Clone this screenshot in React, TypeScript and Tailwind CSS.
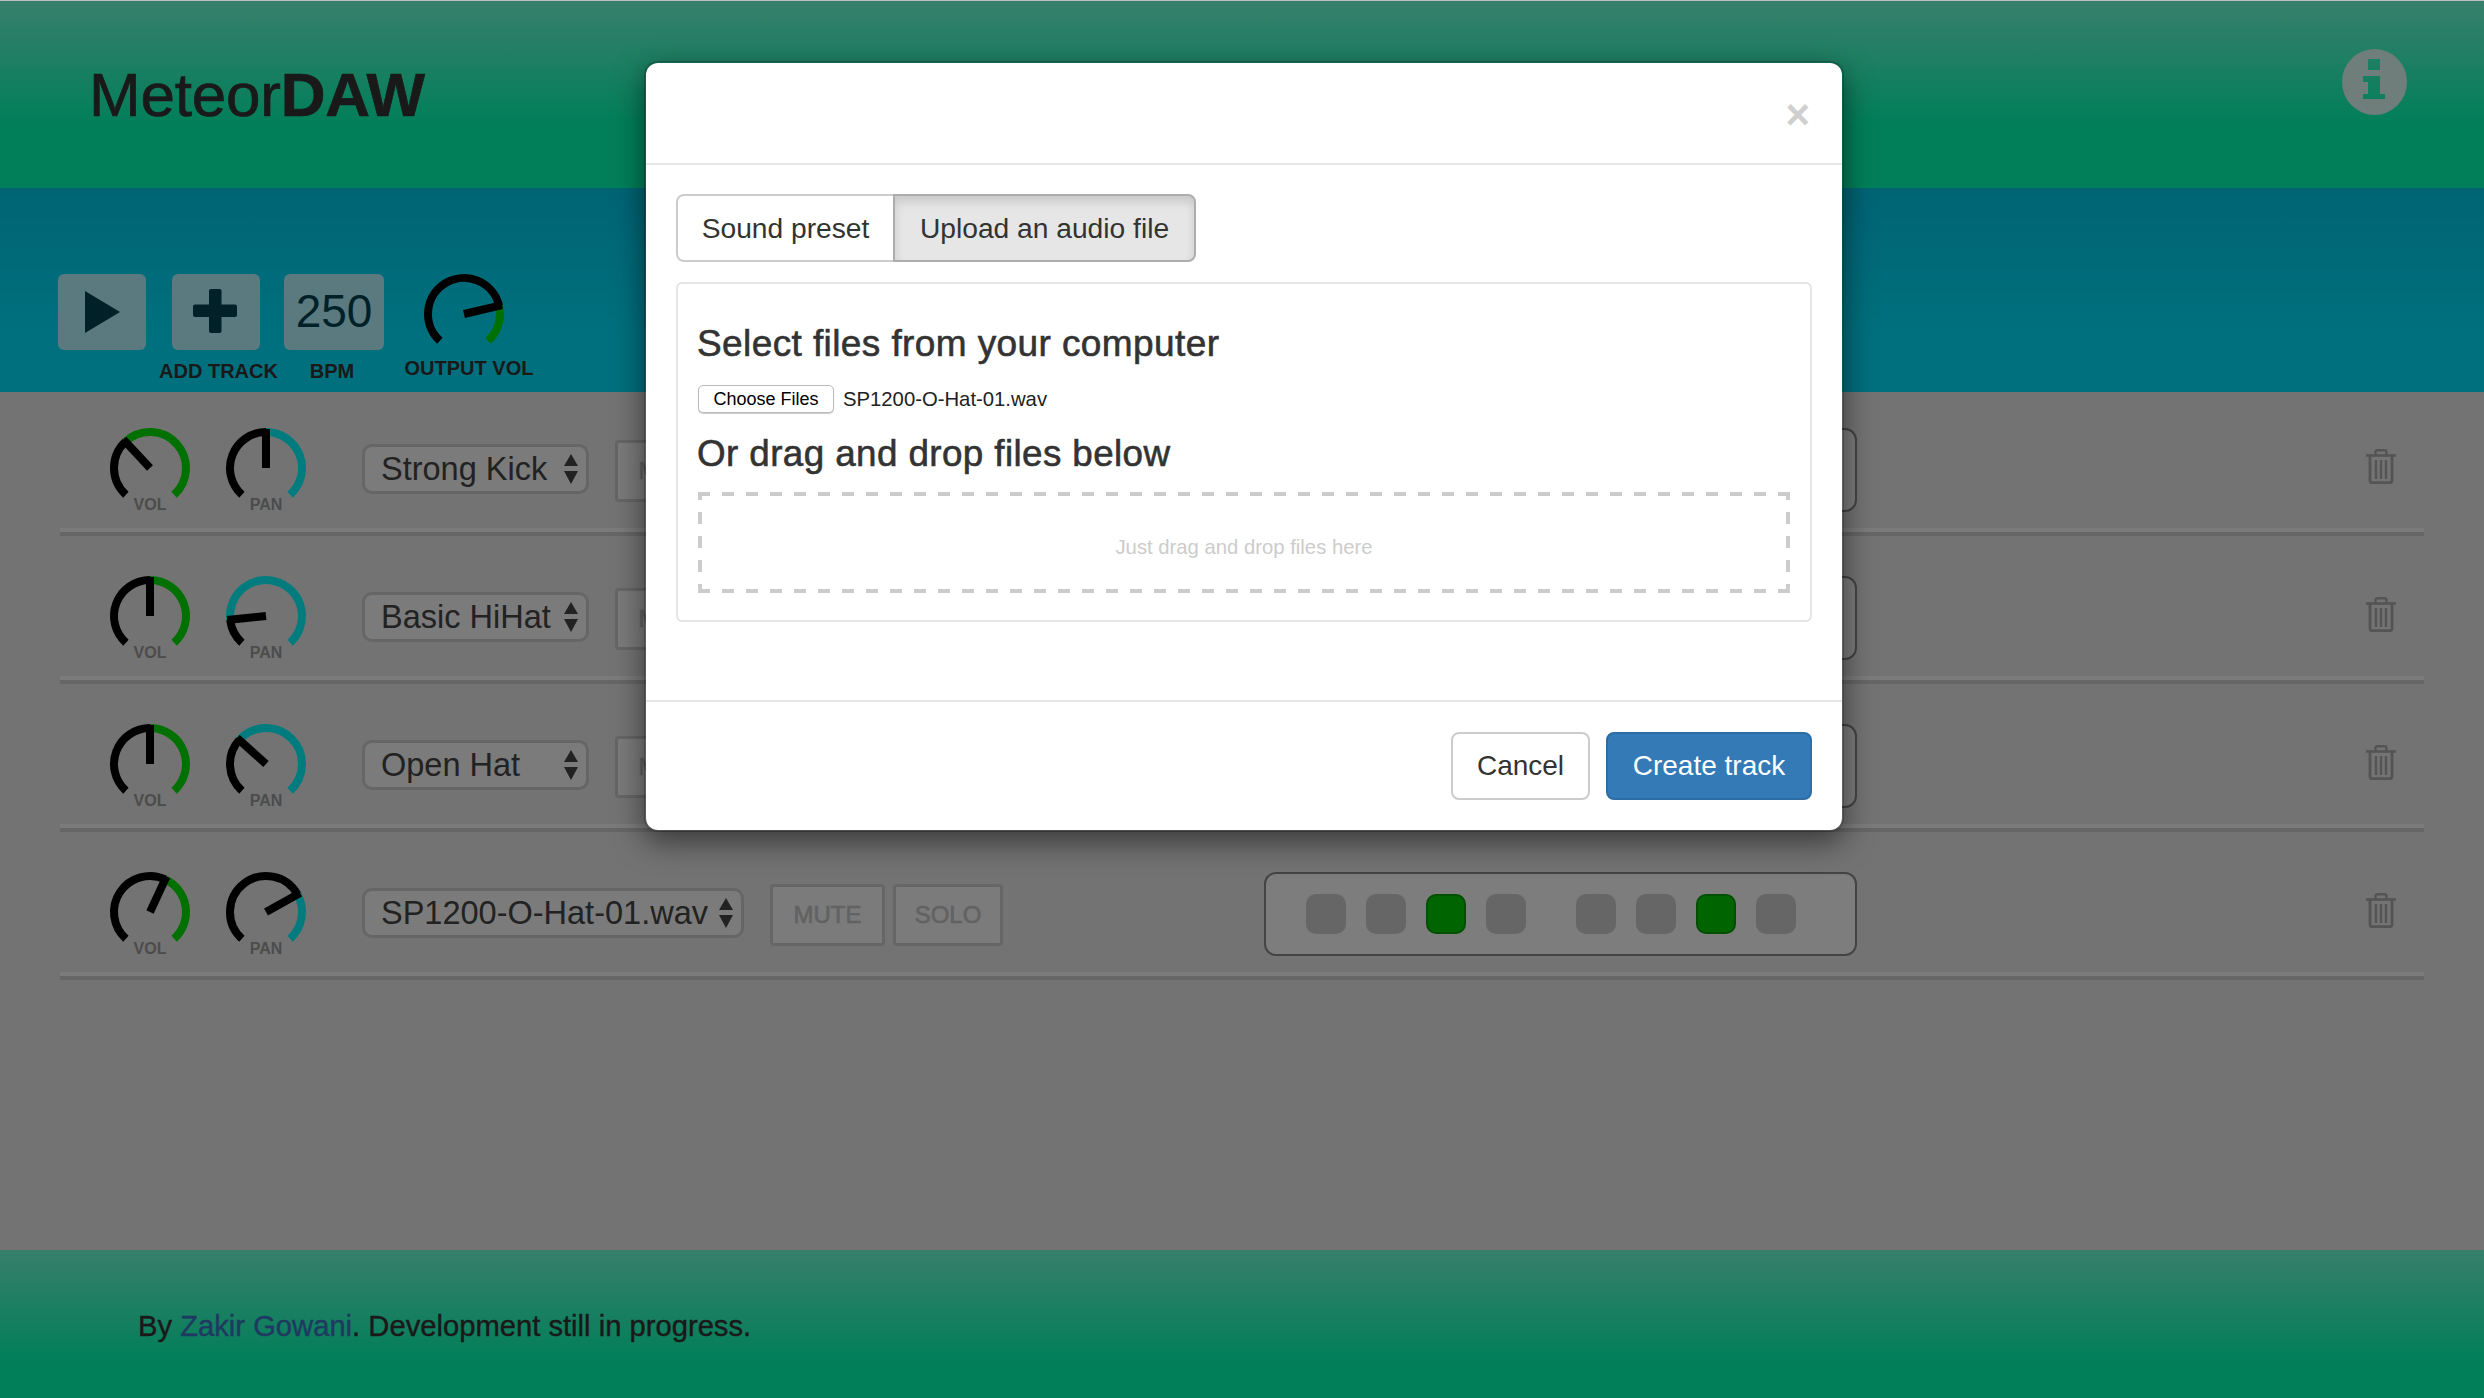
import React from "react";

function polar(r: number, deg: number) {
  const a = ((deg - 90) * Math.PI) / 180;
  return [40 + r * Math.cos(a), 40 + r * Math.sin(a)];
}
function arc(from: number, to: number) {
  const r = 36;
  const [x1, y1] = polar(r, from);
  const [x2, y2] = polar(r, to);
  const large = to - from > 180 ? 1 : 0;
  return `M${x1} ${y1}A${r} ${r} 0 ${large} 1 ${x2} ${y2}`;
}

function Knob({ value, color }: { value: number; color: string }) {
  const [tx, ty] = polar(39, value);
  return (
    <svg width="80" height="72" viewBox="0 0 80 72" className="block overflow-visible">
      <path d={arc(-138, value)} fill="none" stroke="#000" strokeWidth="8" />
      <path d={arc(value, 138)} fill="none" stroke={color} strokeWidth="8" />
      <path d={`M40 40L${tx} ${ty}`} fill="none" stroke="#000" strokeWidth="8" />
    </svg>
  );
}

function LabeledKnob({ value, color, label }: { value: number; color: string; label: string }) {
  return (
    <div className="flex w-[80px] flex-col items-center">
      <Knob value={value} color={color} />
      <div className="mt-[-3px] text-[16px] leading-[16px] font-bold text-[#999999]">{label}</div>
    </div>
  );
}

function Trash() {
  return (
    <svg width="30" height="35" viewBox="0 0 30 35" className="mt-[21px] ml-[509px] shrink-0" fill="none" stroke="#a8a8a8">
      <path d="M0 6.5H30" strokeWidth="2.6" />
      <path d="M9.5 6V3.2C9.5 1.8 10.5 1.2 11.5 1.2H18.5C19.5 1.2 20.5 1.8 20.5 3.2V6" strokeWidth="2.4" />
      <path d="M4 7V31.5C4 33 5 33.7 6 33.7H24C25 33.7 26 33 26 31.5V7" strokeWidth="2.8" />
      <path d="M10 11V30M15 11V30M20 11V30" strokeWidth="2.4" />
    </svg>
  );
}

const ROWS = [
  { name: "Strong Kick", vol: -43, pan: 0, w: "w-[227px]" },
  { name: "Basic HiHat", vol: 0, pan: -96, w: "w-[227px]" },
  { name: "Open Hat", vol: 0, pan: -48, w: "w-[227px]" },
  { name: "SP1200-O-Hat-01.wav", vol: 25, pan: 61, w: "w-[382px]" },
];

function Pad({ on }: { on?: boolean }) {
  return (
    <div
      className={
        on
          ? "h-[40px] w-[40px] rounded-[10px] border-2 border-[#00a000] bg-[#00c800]"
          : "h-[40px] w-[40px] rounded-[10px] bg-[#cccccc]"
      }
    />
  );
}

function Row({ row, first }: { row: (typeof ROWS)[number]; first: boolean }) {
  return (
    <div className="flex flex-col">
      <div className={first ? "flex h-[136px] pt-[36px] pl-[50px]" : "flex h-[140px] pt-[40px] pl-[50px]"}>
        <div className="flex w-[1154px] shrink-0 items-start">
          <div className="flex gap-[36px]">
            <LabeledKnob value={row.vol} color="#00e000" label="VOL" />
            <LabeledKnob value={row.pan} color="#00f8ff" label="PAN" />
          </div>
          <div
            className={`ml-[56px] mt-[16px] flex h-[50px] ${row.w} items-center justify-between rounded-[10px] border-[3px] border-[#cccccc] bg-[#f6f6f6] pr-[8px] pl-[16px] text-[32.500px] text-[#444444]`}
          >
            <span className="whitespace-nowrap">{row.name}</span>
            <svg width="14" height="30" viewBox="0 0 14 30" className="shrink-0">
              <path d="M7 0L14 12H0ZM0 17H14L7 30Z" fill="#444444" />
            </svg>
          </div>
          <div className="mt-[12px] ml-[26px] flex gap-[8px]">
            <div className="flex h-[62px] w-[115px] items-center justify-center rounded-[4px] border-[3px] border-[#cccccc] bg-[#f6f6f6] text-[24px] text-[#c4c4c4] [-webkit-text-stroke:0.6px_#c4c4c4]">
              MUTE
            </div>
            <div className="flex h-[62px] w-[110px] items-center justify-center rounded-[4px] border-[3px] border-[#cccccc] bg-[#f6f6f6] text-[24px] text-[#c4c4c4] [-webkit-text-stroke:0.6px_#c4c4c4]">
              SOLO
            </div>
          </div>
        </div>
        <div className="flex h-[84px] w-[593px] shrink-0 items-center gap-[50px] rounded-[12px] border-2 border-[#888888] bg-[#fafafa] pl-[40px]">
          <div className="flex gap-[20px]">
            <Pad />
            <Pad />
            <Pad on />
            <Pad />
          </div>
          <div className="flex gap-[20px]">
            <Pad />
            <Pad />
            <Pad on />
            <Pad />
          </div>
        </div>
        <Trash />
      </div>
      <div className="h-[4px] bg-[#f6f6f6]" />
      <div className="h-[4px] bg-[#cccccc]" />
    </div>
  );
}

function Tile({ className, children }: { className: string; children: React.ReactNode }) {
  return (
    <div className={`flex h-[76px] items-center justify-center rounded-[6px] bg-[#b5f5ff] ${className}`}>{children}</div>
  );
}

export default function App() {
  return (
    <div className="relative flex h-[1398px] w-[2484px] flex-col overflow-hidden bg-[#e6e6e6] font-['Liberation_Sans',Arial,sans-serif] text-[#333333]">
      <header className="flex h-[188px] shrink-0 items-start justify-between bg-[linear-gradient(180deg,#70ffd8_0%,#00ffb2_68%)] pt-[49px] pr-[77px] pl-[89px]">
        <h1 className="mt-[16px] text-[62px] leading-[60px] tracking-[-0.2px] [-webkit-text-stroke:0.7px_#333333]">
          Meteor<b>DAW</b>
        </h1>
        <svg width="65" height="66" viewBox="0 0 65 66" className="shrink-0">
          <path
            fillRule="evenodd"
            fill="#dffcf4"
            d="M32.5 0A32.5 33 0 1 0 32.5 66A32.5 33 0 1 0 32.5 0ZM26 10H38V21H26ZM21 27H38V45H43V50H21V45H26V33H21Z"
          />
        </svg>
      </header>

      <section className="flex h-[204px] shrink-0 items-start bg-[linear-gradient(180deg,#00c8e8_0%,#00e0fc_70%)] pt-[86px] pl-[58px]">
        <Tile className="w-[88px]">
          <svg width="36" height="42" viewBox="0 0 36 42" className="ml-[2px]">
            <path d="M0 0L35 21L0 42Z" fill="#00424f" />
          </svg>
        </Tile>
        <div className="ml-[26px] flex w-[88px] flex-col items-center">
          <Tile className="w-[88px]">
            <svg width="44" height="44" viewBox="0 0 44 44" className="mr-[3px] mb-[2px]">
              <path
                d="M16 2A2 2 0 0 1 18 0H26.500A2 2 0 0 1 28.500 2V15.500H42A2 2 0 0 1 44 17.500V26A2 2 0 0 1 42 28H28.500V42A2 2 0 0 1 26.500 44H18A2 2 0 0 1 16 42V28H2A2 2 0 0 1 0 26V17.500A2 2 0 0 1 2 15.500H16Z"
                fill="#00424f"
              />
            </svg>
          </Tile>
          <div className="mt-[9px] ml-[5px] text-[20px] leading-[24px] font-bold whitespace-nowrap">ADD TRACK</div>
        </div>
        <div className="ml-[24px] flex w-[100px] flex-col items-center">
          <Tile className="w-[100px] pb-[2px] text-[46px] text-[#00424f]">250</Tile>
          <div className="mt-[9px] mr-[4px] text-[20px] leading-[24px] font-bold">BPM</div>
        </div>
        <div className="ml-[40px] flex w-[80px] flex-col items-center">
          <Knob value={77} color="#00e000" />
          <div className="mt-[10px] ml-[10px] text-[20px] leading-[24px] font-bold whitespace-nowrap">OUTPUT VOL</div>
        </div>
      </section>

      <main className="flex-1 px-[60px]">
        {ROWS.map((r, i) => (
          <Row key={r.name} row={r} first={i === 0} />
        ))}
      </main>

      <footer className="h-[148px] shrink-0 bg-[linear-gradient(180deg,#6effd6_0%,#00ffb2_78%)] pt-[56px] pl-[138px] text-[29.200px] leading-[40px] [-webkit-text-stroke:0.4px_#333333]">
        By <a className="text-[#3d74c0] [-webkit-text-stroke:0.4px_#3d74c0]">Zakir Gowani</a>. Development still in progress.
      </footer>

      <div className="absolute inset-0 border-t border-[#bdbdbd] bg-[rgba(0,0,0,0.5)]">
        <div className="mt-[60px] ml-[644px] w-[1200px] rounded-[14px] border-2 border-black/20 bg-white bg-clip-padding shadow-[0_10px_30px_rgba(0,0,0,0.5)]">
          <div className="flex h-[102px] justify-end border-b-2 border-[#e5e5e5] pt-[31px] pr-[32px] text-[42px] leading-[42px] font-bold text-[#cfcfcf]">
            ×
          </div>
          <div className="pt-[29px] pr-[30px] pb-[78px] pl-[30px]">
            <div className="flex h-[68px] text-[28.200px]">
              <div className="flex w-[219px] items-center justify-center rounded-l-[8px] border-2 border-[#cccccc]">Sound preset</div>
              <div className="ml-[-2px] flex w-[303px] items-center justify-center rounded-r-[8px] border-2 border-[#adadad] bg-[#e6e6e6] shadow-[inset_0_6px_10px_rgba(0,0,0,0.125)]">
                Upload an audio file
              </div>
            </div>
            <div className="mt-[20px] rounded-[6px] border-2 border-[#e5e5e5] px-[20px] pt-[40px] pb-[27px]">
              <h3 className="ml-[-1px] text-[37px] leading-[40px] tracking-[0.4px] [-webkit-text-stroke:0.6px_#333333]">Select files from your computer</h3>
              <div className="mt-[21px] flex h-[28px] items-center">
                <div className="flex h-[28px] w-[136px] items-center justify-center rounded-[5px] border border-[#bbbbbb] bg-white text-[18px] text-black shadow-[0_1px_1px_rgba(0,0,0,0.2)]">
                  Choose Files
                </div>
                <span className="mt-[1px] ml-[9px] text-[20.300px] text-[#222222]">SP1200-O-Hat-01.wav</span>
              </div>
              <h3 className="mt-[21px] ml-[-1px] text-[36.800px] leading-[40px] tracking-[0.4px] [-webkit-text-stroke:0.6px_#333333]">Or drag and drop files below</h3>
              <div className="mt-[18px] flex h-[101px] items-center justify-center bg-[linear-gradient(90deg,#cccccc_50%,transparent_50%),linear-gradient(90deg,#cccccc_50%,transparent_50%),linear-gradient(180deg,#cccccc_50%,transparent_50%),linear-gradient(180deg,#cccccc_50%,transparent_50%)] [background-position:0_0,0_100%,0_-4px,100%_-4px] [background-repeat:repeat-x,repeat-x,repeat-y,repeat-y] [background-size:24px_4px,24px_4px,4px_24px,4px_24px] pt-[10px] text-[20.300px] text-[#cccccc]">
                Just drag and drop files here
              </div>
            </div>
          </div>
          <div className="flex h-[130px] justify-end gap-[16px] border-t-2 border-[#e5e5e5] pt-[30px] pr-[30px] text-[28px]">
            <div className="flex h-[68px] w-[139px] items-center justify-center rounded-[8px] border-2 border-[#cccccc] bg-white">Cancel</div>
            <div className="flex h-[68px] w-[206px] items-center justify-center rounded-[8px] border-2 border-[#2e6da4] bg-[#337ab7] text-white">Create track</div>
          </div>
        </div>
      </div>
    </div>
  );
}
